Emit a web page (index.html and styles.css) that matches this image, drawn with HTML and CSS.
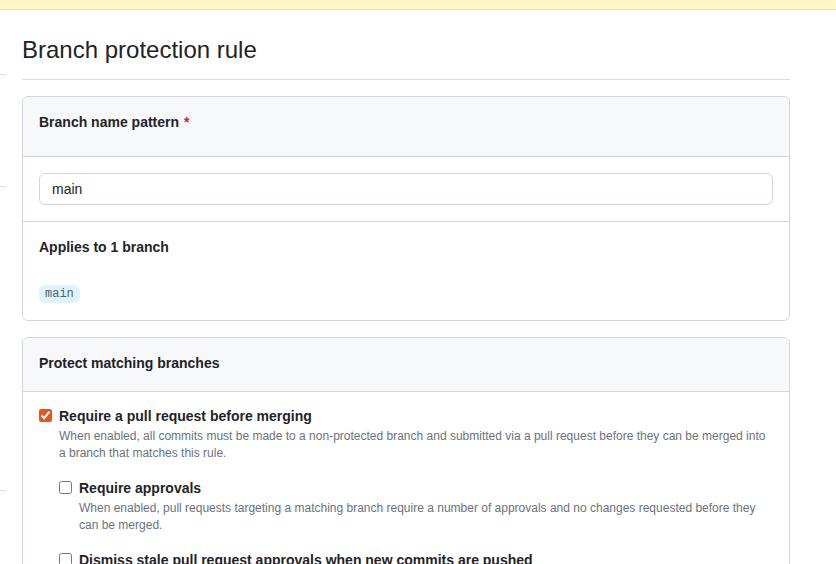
FILE: index.html
```html
<!DOCTYPE html>
<html lang="en">
<head>
<meta charset="utf-8">
<title>Branch protection rule</title>
<link rel="stylesheet" href="styles.css">
</head>
<body>
<div class="flash"></div>
<div class="layout">
  <nav class="side">
    <div class="side-item s1"></div>
    <div class="side-item s2"></div>
    <div class="side-item s3"></div>
  </nav>
  <main class="main">
    <div class="subhead">
      <h2 class="subhead-heading">Branch protection rule</h2>
    </div>

    <div class="box">
      <div class="box-header header-tall">
        <h3 class="box-title">Branch name pattern <span class="req">*</span></h3>
      </div>
      <div class="box-row row-input">
        <input class="form-control" type="text" value="main">
      </div>
      <div class="box-row row-applies">
        <h4 class="applies">Applies to 1 branch</h4>
        <div class="branches"><code class="branch">main</code></div>
      </div>
    </div>

    <div class="box">
      <div class="box-header">
        <h3 class="box-title">Protect matching branches</h3>
      </div>
      <div class="box-body">
        <div class="check">
          <input type="checkbox" checked>
          <div class="check-content">
            <label class="check-label">Require a pull request before merging</label>
            <p class="note">When enabled, all commits must be made to a non-protected branch and submitted via a pull request before they can be merged into a branch that matches this rule.</p>
            <div class="check sub">
              <input type="checkbox">
              <div class="check-content">
                <label class="check-label">Require approvals</label>
                <p class="note">When enabled, pull requests targeting a matching branch require a number of approvals and no changes requested before they can be merged.</p>
              </div>
            </div>
            <div class="check sub">
              <input type="checkbox">
              <div class="check-content">
                <label class="check-label">Dismiss stale pull request approvals when new commits are pushed</label>
                <p class="note">New reviewable commits pushed to a matching branch will dismiss pull request review approvals.</p>
              </div>
            </div>
          </div>
        </div>
      </div>
    </div>
  </main>
</div>
</body>
</html>
```

FILE: styles.css
```css
* { box-sizing: border-box; }

html, body {
  margin: 0;
  padding: 0;
  background: #ffffff;
  overflow: hidden;
}

body {
  font-family: "Liberation Sans", Arial, sans-serif;
  font-size: 14px;
  line-height: 1.5;
  color: #1f2328;
  width: 836px;
  height: 564px;
}

.flash {
  height: 10px;
  background: #fff8c5;
  border-bottom: 1px solid #eedb8a;
}

.layout {
  display: flex;
  gap: 16px;
}

.side {
  width: 6px;
  flex: none;
  display: flex;
  flex-direction: column;
}

.side-item {
  border-bottom: 1px solid #d8dee4;
}
.s1 { height: 65px; }
.s2 { height: 112px; }
.s3 { height: 304px; }

.main {
  width: 768px;
  flex: none;
  padding-top: 22px;
}

.subhead {
  border-bottom: 1px solid #d8dee4;
  padding-bottom: 11px;
  margin-bottom: 16px;
}

.subhead-heading {
  margin: 0;
  font-size: 24px;
  font-weight: 400;
  line-height: 36px;
}

.box {
  border: 1px solid #d0d7de;
  border-radius: 6px;
  margin-bottom: 16px;
  background: #fff;
}

.box-header {
  background: #f6f8fa;
  border-bottom: 1px solid #d0d7de;
  border-radius: 6px 6px 0 0;
  padding: 15px 16px 17px;
}

.header-tall {
  padding-bottom: 23px;
}

.box-title {
  margin: 0;
  font-size: 14px;
  font-weight: 700;
  line-height: 21px;
}

.req {
  color: #d1242f;
  margin-left: 1px;
}

.box-row {
  padding: 16px;
}

.row-input {
  border-bottom: 1px solid #d0d7de;
}

.form-control {
  display: block;
  width: 100%;
  height: 32px;
  padding: 5px 12px;
  font-family: "Liberation Sans", Arial, sans-serif;
  font-size: 14px;
  color: #1f2328;
  background: #ffffff;
  border: 1px solid #d0d7de;
  border-radius: 6px;
  outline: none;
}

.row-applies {
  padding: 15px 16px 17px;
}

.applies {
  margin: 0 0 27px;
  font-size: 14px;
  font-weight: 700;
  line-height: 21px;
}

.branches {
  display: flex;
}

.branch {
  display: block;
  height: 18px;
  font-family: "Liberation Mono", "DejaVu Sans Mono", monospace;
  font-size: 12px;
  line-height: 18px;
  color: #57606a;
  background: #ddf4ff;
  border-radius: 6px;
  padding: 0 6px;
}

.box-body {
  padding: 15px 16px 0;
}

.check {
  display: flex;
  gap: 7px;
  align-items: flex-start;
}

.check input {
  flex: none;
  width: 13px;
  height: 13px;
  margin: 2px 0 0;
  accent-color: #e95420;
}

.check-content {
  flex: 1;
  min-width: 0;
}

.check-label {
  display: block;
  font-size: 14px;
  font-weight: 700;
  line-height: 18px;
}

.note {
  margin: 3px 0 0;
  font-size: 12px;
  line-height: 17px;
  color: #6a737d;
}

.check.sub {
  margin-top: 17px;
}
```
